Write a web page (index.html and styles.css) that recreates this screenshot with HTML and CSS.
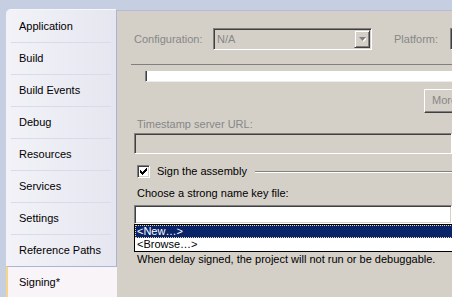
FILE: index.html
```html
<!DOCTYPE html>
<html>
<head>
    <title>Project Properties - Signing</title>
    <link rel="stylesheet" href="styles.css">
</head>
<body>
    <div class="frame">
        <nav class="sidebar">
            <ul class="tab-list">
                <li class="tab">Application</li>
                <li class="tab">Build</li>
                <li class="tab">Build Events</li>
                <li class="tab">Debug</li>
                <li class="tab">Resources</li>
                <li class="tab">Services</li>
                <li class="tab">Settings</li>
                <li class="tab last">Reference Paths</li>
            </ul>
            <div class="tab-sel">Signing*</div>
        </nav>

        <main class="page">
            <div class="config-row">
                <span class="lbl dim cfg-lbl">Configuration:</span>
                <div class="combo disabled cfg-combo">
                    <span class="combo-text">N/A</span>
                    <span class="drop">
                        <svg width="7" height="5" viewBox="0 0 7 5">
                            <path d="M1 1h7l-3.5 4z" fill="#fff"/>
                            <path d="M0 0h7l-3.5 4z" fill="#808080"/>
                        </svg>
                    </span>
                </div>
                <span class="lbl dim plat-lbl">Platform:</span>
                <div class="combo disabled plat-combo"></div>
            </div>

            <div class="rule"></div>
            <div class="cut-box"></div>

            <div class="btn more">More...</div>

            <div class="lbl dim field-lbl">Timestamp server URL:</div>
            <div class="textbox disabled ts-box"></div>

            <div class="check-row">
                <span class="check">
                    <svg width="9" height="9" viewBox="0 0 9 9">
                        <path d="M1 3h1v1h1v1h1V4h1V3h1V2h1V1h1v3H7v1H6v1H5v1H4v1H3V7H2V6H1z" fill="#000"/>
                    </svg>
                </span>
                <span class="lbl">Sign the assembly</span>
                <span class="group-line"></span>
            </div>

            <div class="lbl key-lbl">Choose a strong name key file:</div>
            <div class="key-combo">
                <div class="textbox key-box"></div>
                <ul class="dropdown">
                    <li class="sel">&lt;New…&gt;</li>
                    <li>&lt;Browse…&gt;</li>
                </ul>
            </div>

            <div class="lbl hint">When delay signed, the project will not run or be debuggable.</div>
        </main>
    </div>
</body>
</html>
```

FILE: styles.css
```css
body {
    margin: 0;
    background: #c6cee2;
    font-family: 'Liberation Sans', Arial, sans-serif;
    font-size: 11px;
    color: #000;
    overflow: hidden;
}
.frame {
    display: flex;
    height: 287px;
    margin: 10px 0 0 6px;
}

/* left tab strip */
.sidebar {
    width: 111px;
    flex: none;
    display: flex;
    flex-direction: column;
}
.tab-list {
    list-style: none;
    margin: 0;
    padding: 1px 0 0;
    border-right: 1px solid #aab4d4;
    border-top-left-radius: 5px;
    border-top: 1px solid #f6f6fc;
    margin-top: -1px;
    background: linear-gradient(to right, #f2f2f8, #e6e6f0);
}
.tab {
    height: 31px;
    line-height: 31px;
    margin: 0 5px;
    padding-left: 8px;
    border-bottom: 1px solid #dadaea;
    white-space: nowrap;
}
.tab.last {
    border-bottom: none;
}
.tab-sel {
    flex: 1;
    line-height: 31px;
    padding-left: 11px;
    background: #f8f4f8;
    border-top: 1px solid #aab4d4;
    border-left: 2px solid #f6d488;
}

/* property page */
.page {
    flex: 1;
    background: #d4d0c8;
    border-top: 1px solid #b4bcd8;
    overflow: hidden;
    padding-top: 17px;
}
.lbl {
    line-height: 13px;
    white-space: nowrap;
}
.dim {
    color: #878787;
}
.config-row {
    display: flex;
    align-items: center;
    height: 22px;
    padding-left: 17px;
}
.cfg-lbl {
    width: 79px;
    flex: none;
}
.plat-lbl {
    width: 56px;
    flex: none;
    margin-left: 22px;
}
.combo {
    flex: none;
    height: 22px;
    box-sizing: border-box;
    border: 1px solid;
    border-color: #808080 #fff #fff #808080;
    box-shadow: inset 1px 1px #404040, inset -1px -1px #d4d0c8;
    display: flex;
    align-items: center;
    padding: 1px;
}
.combo.disabled {
    background: #d4d0c8;
    color: #878787;
}
.cfg-combo {
    width: 159px;
}
.plat-combo {
    width: 100px;
}
.combo-text {
    flex: 1;
    padding-left: 2px;
}
.drop {
    width: 16px;
    height: 18px;
    box-sizing: border-box;
    border: 1px solid;
    border-color: #d4d0c8 #404040 #404040 #d4d0c8;
    box-shadow: inset 1px 1px #fff, inset -1px -1px #808080;
    display: flex;
    align-items: center;
    justify-content: center;
}
.rule {
    height: 1px;
    background: #808080;
    margin: 14px 0 0 14px;
}
.cut-box {
    height: 10px;
    margin: 6px 0 0 28px;
    background: #fff;
    border-left: 1px solid #808080;
    box-shadow: inset 1px 0 #404040;
    border-bottom: 1px solid #ececec;
}
.btn {
    height: 24px;
    width: 75px;
    box-sizing: border-box;
    margin: 7px 0 0 307px;
    border: 1px solid;
    border-color: #fff #404040 #404040 #fff;
    box-shadow: inset -1px -1px #808080;
    line-height: 21px;
    padding-left: 7px;
    color: #878787;
}
.field-lbl {
    margin: 5px 0 0 20px;
}
.textbox {
    height: 21px;
    box-sizing: border-box;
    margin-left: 17px;
    border: 1px solid;
    border-color: #808080 #fff #fff #808080;
    box-shadow: inset 1px 1px #404040, inset -1px -1px #d4d0c8;
    background: #fff;
}
.textbox.disabled {
    background: #d4d0c8;
}
.ts-box {
    margin-top: 2px;
}
.check-row {
    display: flex;
    align-items: center;
    height: 13px;
    margin: 11px 0 0 20px;
}
.check {
    width: 13px;
    height: 13px;
    box-sizing: border-box;
    border: 1px solid;
    border-color: #808080 #fff #fff #808080;
    box-shadow: inset 1px 1px #404040, inset -1px -1px #d4d0c8;
    background: #fff;
    display: flex;
    align-items: center;
    justify-content: center;
    margin-right: 7px;
}
.group-line {
    flex: 1;
    height: 1px;
    background: #808080;
    border-bottom: 1px solid #fff;
    margin-left: 8px;
}
.key-lbl {
    margin: 9px 0 0 20px;
}
.key-combo {
    position: relative;
    margin-top: 5px;
}
.key-box {
    height: 19px;
}
.dropdown {
    position: absolute;
    top: 100%;
    left: 17px;
    right: -2px;
    list-style: none;
    margin: 0;
    padding: 0;
    background: #fff;
    border: 1px solid #000;
}
.dropdown li {
    height: 13px;
    line-height: 13px;
    padding-left: 2px;
    white-space: nowrap;
}
.dropdown li.sel {
    background: #0a246a;
    color: #fff;
    outline: 1px dotted #e8dc98;
    outline-offset: -1px;
}
.hint {
    margin: 29px 0 0 20px;
}
```
